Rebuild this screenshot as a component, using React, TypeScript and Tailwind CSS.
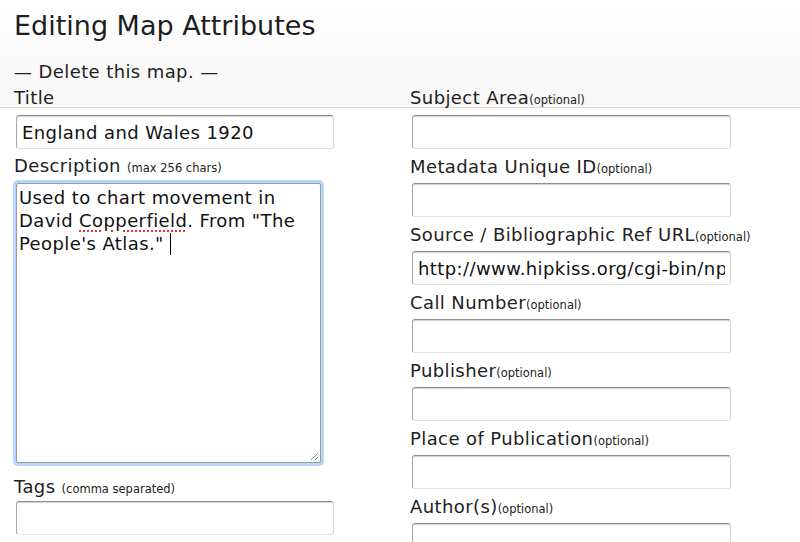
const inputCls =
  "h-[34px] rounded-[3px] border border-t-[#8f8f8f] border-l-[#a9a9a9] border-r-[#d6d6d6] border-b-[#e2e2e2] shadow-[inset_0_1px_1px_rgba(0,0,0,0.18)] bg-white px-[5px] text-[18px] tracking-[0.4px] text-[#111] outline-none";

function Label({ text, note, sep = "" }: { text: string; note: string; sep?: string }) {
  return (
    <div className="text-[18px] tracking-[0.4px] text-[#222]">
      {text}
      {sep}
      <span className="text-[11.5px] tracking-normal">{note}</span>
    </div>
  );
}

function Field({ label, value = "" }: { label: string; value?: string }) {
  return (
    <div className="flex flex-col">
      <div className="h-[34px] pt-[7px] leading-[22px]">
        <Label text={label} note="(optional)" />
      </div>
      <input className={inputCls + " ml-[2px] w-[319px]"} readOnly value={value} />
    </div>
  );
}

export default function App() {
  return (
    <div className="min-h-screen w-[800px] overflow-hidden bg-white font-['DejaVu_Sans',Verdana,sans-serif] text-[#222]">
      <header className="border-b border-[#e4dad3] bg-gradient-to-b from-white to-[#f7f7f7] pt-[9px]">
        <h1 className="px-[14px] text-[27px] leading-[34px] text-[#1e1e1e]">Editing Map Attributes</h1>
        <div className="mt-[18px] px-[14px] text-[18px] leading-[22px] tracking-[0.4px]">— Delete this map. —</div>
        <div className="mt-[6px] grid h-[18px] grid-cols-[396px_1fr] px-[14px] leading-[18px]">
          <div className="text-[18px] tracking-[0.4px]">Title</div>
          <Label text="Subject Area" note="(optional)" />
        </div>
      </header>

      <main className="grid grid-cols-[396px_1fr] px-[14px] pt-[7px]">
        {/* left column */}
        <div className="flex flex-col">
          <input className={inputCls + " ml-[2px] w-[318px]"} readOnly value="England and Wales 1920" />
          <div className="h-[31px] pt-[6px] leading-[22px]">
            <Label text="Description" note="(max 256 chars)" sep=" " />
          </div>
          <div className="relative mt-[3px] ml-[2px] h-[280px] w-[305px] rounded-[2px] border border-[#9c9c9c] bg-white px-[2px] pt-[2px] text-[18px] leading-[23px] tracking-[0.4px] text-[#111] ring-[3px] ring-[#b9d6f8]">
            <div>Used to chart movement in</div>
            <div>
              David{" "}
              <span className="underline decoration-dotted decoration-[#e2372f] decoration-2 underline-offset-[3px]">
                Copperfield
              </span>
              . From "The
            </div>
            <div>
              People's Atlas."
              <span className="ml-[6px] inline-block h-[22px] w-px bg-black align-[-5px]" />
            </div>
            <svg className="absolute bottom-[1px] right-[1px]" width="10" height="10" viewBox="0 0 10 10">
              <path d="M9 2 L2 9 M9 6 L6 9" stroke="#8a8a8a" strokeWidth="1" fill="none" />
            </svg>
          </div>
          <div className="h-[38px] pt-[13px] leading-[22px]">
            <Label text="Tags" note="(comma separated)" sep=" " />
          </div>
          <input className={inputCls + " ml-[2px] w-[318px]"} readOnly value="" />
        </div>

        {/* right column */}
        <div className="flex flex-col">
          <input className={inputCls + " ml-[2px] w-[319px]"} readOnly value="" />
          <Field label="Metadata Unique ID" />
          <Field label="Source / Bibliographic Ref URL" value="http://www.hipkiss.org/cgi-bin/nph-maps.pl" />
          <Field label="Call Number" />
          <Field label="Publisher" />
          <Field label="Place of Publication" />
          <Field label="Author(s)" />
        </div>
      </main>
    </div>
  );
}
